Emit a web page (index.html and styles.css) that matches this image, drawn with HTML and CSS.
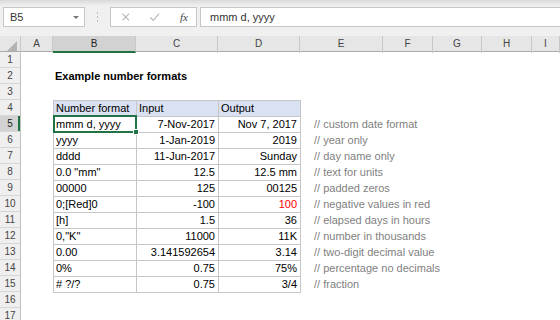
FILE: index.html
```html
<!DOCTYPE html>
<html lang="en">

<head>
    <meta charset="UTF-8">
    <title>Example number formats</title>
    <link rel="stylesheet" href="styles.css">
</head>

<body>
    <div class="toolbar">
        <div class="namebox">
            <span>B5</span>
            <span class="caret"></span>
        </div>
        <div class="grip"><i></i><i></i><i></i></div>
        <div class="fxbox">
            <svg width="10" height="10" viewBox="0 0 10 10"><path d="M1.5 1.5 L8.5 8.5 M8.5 1.5 L1.5 8.5" stroke="#b8b8b8" stroke-width="1.2" fill="none"/></svg>
            <svg width="12" height="10" viewBox="0 0 12 10"><path d="M1.5 5.5 L4.5 8.5 L10.5 1.5" stroke="#b8b8b8" stroke-width="1.2" fill="none"/></svg>
            <span class="fx">fx</span>
        </div>
        <div class="formula">mmm d, yyyy</div>
    </div>

    <div class="colheads">
        <div class="corner"></div>
        <div>A</div>
        <div class="sel">B</div>
        <div>C</div>
        <div>D</div>
        <div>E</div>
        <div>F</div>
        <div>G</div>
        <div>H</div>
        <div>I</div>
    </div>

    <div class="sheet">
        <div class="rowheads">
            <div>1</div><div>2</div><div>3</div><div>4</div>
            <div class="sel">5</div>
            <div>6</div><div>7</div><div>8</div><div>9</div><div>10</div>
            <div>11</div><div>12</div><div>13</div><div>14</div><div>15</div>
            <div>16</div><div>17</div>
        </div>

        <div class="title">Example number formats</div>

        <div class="data">
            <div class="hd">Number format</div><div class="hd">Input</div><div class="hd">Output</div>
            <div>mmm d, yyyy</div><div class="num">7-Nov-2017</div><div class="num">Nov 7, 2017</div>
            <div>yyyy</div><div class="num">1-Jan-2019</div><div class="num">2019</div>
            <div>dddd</div><div class="num">11-Jun-2017</div><div class="num">Sunday</div>
            <div>0.0 "mm"</div><div class="num">12.5</div><div class="num">12.5 mm</div>
            <div>00000</div><div class="num">125</div><div class="num">00125</div>
            <div>0;[Red]0</div><div class="num">-100</div><div class="num red">100</div>
            <div>[h]</div><div class="num">1.5</div><div class="num">36</div>
            <div>0,"K"</div><div class="num">11000</div><div class="num">11K</div>
            <div>0.00</div><div class="num">3.141592654</div><div class="num">3.14</div>
            <div>0%</div><div class="num">0.75</div><div class="num">75%</div>
            <div># ?/?</div><div class="num">0.75</div><div class="num">3/4</div>
        </div>

        <div class="cursor"></div>

        <div class="notes">
            <div>// custom date format</div>
            <div>// year only</div>
            <div>// day name only</div>
            <div>// text for units</div>
            <div>// padded zeros</div>
            <div>// negative values in red</div>
            <div>// elapsed days in hours</div>
            <div>// number in thousands</div>
            <div>// two-digit decimal value</div>
            <div>// percentage no decimals</div>
            <div>// fraction</div>
        </div>
    </div>
</body>

</html>
```

FILE: styles.css
```css
:root {
    --cols: 21px 32px 83px 82px 82px 83px 50px 49px 50px 1fr;
}

body {
    margin: 0;
    width: 560px;
    height: 320px;
    overflow: hidden;
    font-family: "Liberation Sans", Arial, sans-serif;
    font-size: 11px;
    color: #000;
    background: #fff;
}

/* formula bar */
.toolbar {
    height: 36px;
    box-sizing: border-box;
    padding: 7px 0 0 3px;
    display: flex;
    align-items: flex-start;
    background: linear-gradient(#d9d9d9, #f0f0f0 6px);
}

.namebox {
    width: 82px;
    height: 20px;
    box-sizing: border-box;
    border: 1px solid #c6c6c6;
    background: #fff;
    display: flex;
    align-items: center;
    justify-content: space-between;
    padding: 0 5px 0 6px;
    color: #333;
}

.caret {
    width: 0;
    height: 0;
    border-left: 3px solid transparent;
    border-right: 3px solid transparent;
    border-top: 3px solid #777;
}

.grip {
    width: 25px;
    height: 20px;
    display: flex;
    flex-direction: column;
    align-items: center;
    justify-content: center;
    gap: 2px;
}

.grip i {
    width: 1px;
    height: 2px;
    background: #bdbdbd;
}

.fxbox {
    width: 87px;
    height: 20px;
    box-sizing: border-box;
    border: 1px solid #c6c6c6;
    background: #fff;
    display: flex;
    align-items: center;
    padding: 0 8px 0 10px;
    gap: 18px;
}

.fx {
    margin-left: 2px;
    font-family: "Liberation Serif", serif;
    font-style: italic;
    font-size: 11px;
    color: #444;
}

.formula {
    flex: 1;
    height: 20px;
    box-sizing: border-box;
    margin-left: 3px;
    border: 1px solid #c6c6c6;
    border-right: none;
    background: #fff;
    padding: 0 9px;
    line-height: 18px;
    color: #333;
}

/* column headers */
.colheads {
    display: grid;
    grid-template-columns: var(--cols);
    height: 16px;
    background: #e6e6e6;
    border-bottom: 1px solid #ababab;
    box-sizing: border-box;
}

.colheads div {
    border-right: 1px solid #c8c8c8;
    text-align: center;
    line-height: 15px;
    font-size: 10px;
    color: #444;
}

.colheads .sel {
    background: #d2d2d2;
    border-bottom: 2px solid #217346;
    color: #222;
}

.colheads .corner {
    position: relative;
    border-right: 1px solid #c8c8c8;
}

.colheads .corner::after {
    content: "";
    position: absolute;
    right: 3px;
    bottom: 2px;
    border-left: 10px solid transparent;
    border-bottom: 10px solid #b4b4b4;
}

/* cell area */
.sheet {
    display: grid;
    grid-template-columns: var(--cols);
    grid-template-rows: repeat(17, 16px);
}

.rowheads {
    grid-column: 1;
    grid-row: 1 / -1;
    display: grid;
    grid-auto-rows: 16px;
    background: #efefef;
    border-right: 1px solid #c0c0c0;
}

.rowheads div {
    border-bottom: 1px solid #d6d6d6;
    text-align: center;
    line-height: 15px;
    font-size: 10px;
    color: #444;
}

.rowheads .sel {
    background: #d2d2d2;
    box-shadow: inset -2px 0 0 #217346;
    color: #222;
}

.title {
    grid-column: 3 / 6;
    grid-row: 2;
    padding-left: 2px;
    line-height: 16px;
    font-weight: bold;
}

.data {
    grid-column: 3 / 6;
    grid-row: 4 / 16;
    justify-self: start;
    align-self: start;
    display: grid;
    grid-template-columns: 82px 81px 81px;
    grid-auto-rows: 15px;
    gap: 1px;
    border: 1px solid #c6c6c6;
    background: #c6c6c6;
}

.data div {
    background: #fff;
    padding: 0 3px 0 2px;
    line-height: 15px;
    white-space: nowrap;
    overflow: hidden;
}

.data .hd {
    background: #d9e1f2;
}

.data .num {
    text-align: right;
}

.data .red {
    color: #ff0000;
}

.cursor {
    grid-column: 3;
    grid-row: 5;
    margin: -1px -1px -1px 0;
    border: 2px solid #217346;
    position: relative;
    z-index: 2;
}

.cursor::after {
    content: "";
    position: absolute;
    right: -4px;
    bottom: -4px;
    width: 4px;
    height: 4px;
    background: #217346;
    border: 1px solid #fff;
}

.notes {
    grid-column: 6 / 10;
    grid-row: 5 / 16;
    padding-left: 14px;
    color: #7f7f7f;
}

.notes div {
    height: 16px;
    line-height: 16px;
    white-space: nowrap;
}
```
